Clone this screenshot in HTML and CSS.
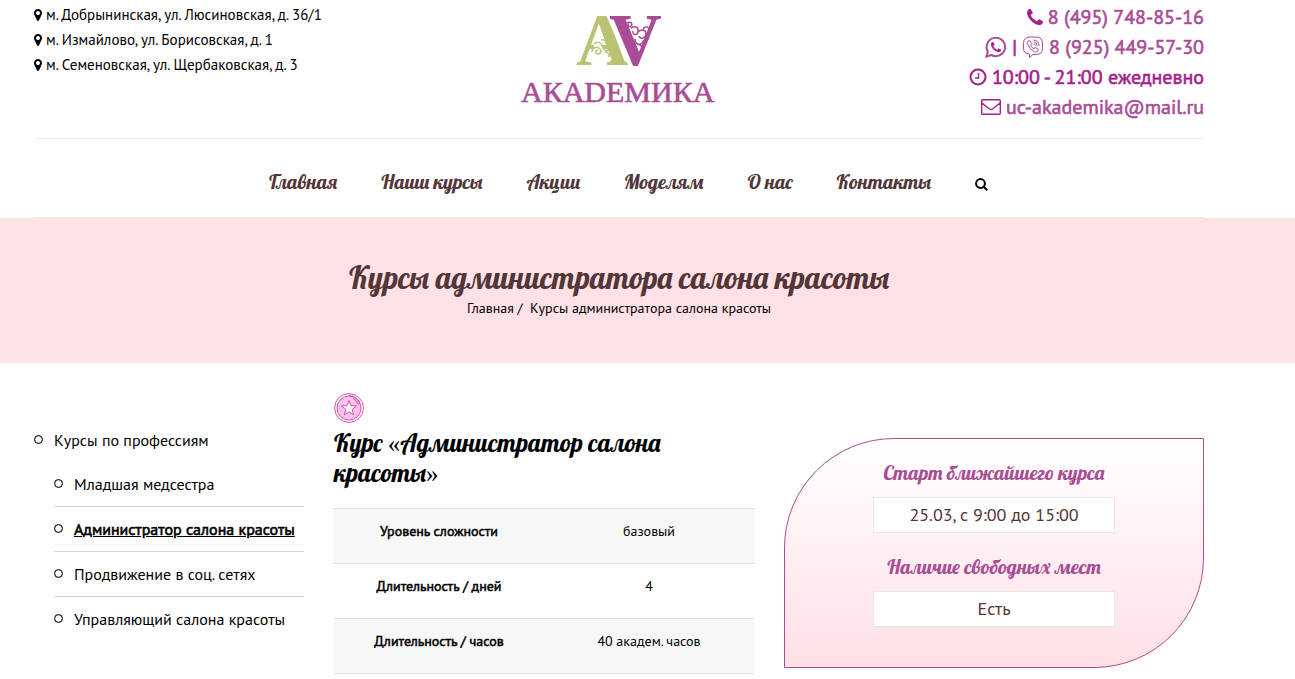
FILE: index.html
```html
<!DOCTYPE html>
<html lang="ru">
<head>
<meta charset="utf-8">
<title>Курсы администратора салона красоты</title>
<link rel="stylesheet" href="styles.css">
</head>
<body>
<svg class="sprite" aria-hidden="true">
  <symbol id="pin" viewBox="0 128 1024 1536"><path d="M768 640q0-106-75-181t-181-75-181 75-75 181 75 181 181 75 181-75 75-181zm256 0q0 109-33 179l-364 774q-16 33-47.500 52t-67.500 19-67.500-19-46.500-52l-365-774q-33-70-33-179 0-212 150-362t362-150 362 150 150 362z"/></symbol>
  <symbol id="phone" viewBox="0 128 1408 1408"><path d="M1408 1240q0 27-10 70.500t-21 68.500q-21 50-122 106-94 51-186 51-27 0-53-3.500t-57.500-12.500-47-14.500-55.500-20.500-49-18q-98-35-175-83-127-79-264-216t-216-264q-48-77-83-175-3-9-18-49t-20.500-55.500-14.500-47-12.500-57.500-3.500-53q0-92 51-186 56-101 106-122 25-11 68.500-21t70.500-10q14 0 21 3 18 6 53 76 11 19 30 54t35 63.500 31 53.500q3 4 17.500 25t21.500 35.500 7 28.500q0 20-28.500 50t-62 55-62 53-28.500 46q0 9 5 22.500t8.500 20.500 14 24 11.500 19q76 137 174 235t235 174q2 1 19 11.500t24 14 20.500 8.500 22.500 5q18 0 46-28.500t53-62 55-62 50-28.500q14 0 28.500 7t35.500 21.500 25 17.500q25 15 53.500 31t63.500 35 54 30q70 35 76 53 3 7 3 21z"/></symbol>
</svg>

<header class="shell">
  <div class="top">
    <address class="places">
      <span class="place"><svg class="pin"><use href="#pin"/></svg>м. Добрынинская, ул. Люсиновская, д. 36/1</span>
      <span class="place"><svg class="pin"><use href="#pin"/></svg>м. Измайлово, ул. Борисовская, д. 1</span>
      <span class="place"><svg class="pin"><use href="#pin"/></svg>м. Семеновская, ул. Щербаковская, д. 3</span>
    </address>
    <a class="logo" href="#">
      <svg width="196" height="92" viewBox="0 0 196 92" role="img" aria-label="Академика">
        <defs>
          <clipPath id="left-half"><path d="M40 0h45l23 52H40z"/></clipPath>
          <clipPath id="right-half"><path d="M87 0h60v52h-36z"/></clipPath>
        </defs>
        <g clip-path="url(#left-half)"><text class="mono mono-a" x="55" y="50">A</text></g>
        <g clip-path="url(#right-half)"><text class="mono mono-v" x="88" y="50">V</text></g>
        <path fill="#fff" d="M73.500 29h7l3 7h-12z"/>
        <path class="curl curl-a" d="M71 37c0-4 4-6 7-4s2 6-1 6-3-4 0-4M73 29c3-3 7-2 8 2s5 6 8 3M80 25c3-1 5 1 5 4M84 37c3 0 5 2 4 5M87 41c5-2 7 1 7 4s-4 3-4 0"/>
        <path class="curl curl-v" d="M106 8c4-2 6 1 4 3s-4-1-2-2M110 13c5-3 8 0 7 4s-6 3-5-1M116 18c4-5 9-3 9 1s-6 6-7 2M114 24c0 5 4 7 7 4s3-6 7-4M118 29c3 4 6 2 7 0M122 15c1-4 5-4 6-1"/>
        <text class="wordmark" x="0" y="87">АКАDЕМИКА</text>
      </svg>
    </a>
    <div class="contacts">
      <a class="contact" href="tel:+74957488516"><svg class="i-phone"><use href="#phone"/></svg>8 (495) 748-85-16</a>
      <a class="contact" href="tel:+79254495730">
        <svg class="i-chat" viewBox="0 0 22 22"><path class="heavy" d="M1.500 20.500l1.400-5A9.200 9.200 0 1 1 6.500 19z"/><svg x="6" y="6" width="10" height="10"><use href="#phone"/></svg></svg>
        <span class="bar">|</span>
        <svg class="i-chat" viewBox="0 0 22 22"><path class="fine" d="M8 1h6q6.500 0 6.500 6.500v5q0 6-6.500 6h-3L7.500 21.500v-3.300Q1.500 17.500 1.500 12.500v-5Q1.500 1 8 1zM6 5.200l1.500-.7 2.300 3-1.200 1.700q1 2.600 3.300 3.500l1.500-1.300 3 2.200-.6 1.600q-1.300 1.600-3.300.6-5.500-2.800-7.300-8.300-.3-1.300.8-2.300zM11.500 4q5.500.5 5.500 6M11.800 6q3.200.3 3.300 3.700M12 8q1.300.2 1.300 1.500"/></svg>
        8 (925) 449-57-30</a>
      <span class="contact hours"><svg class="i-clock" viewBox="0 0 18 18"><circle class="heavy" cx="9" cy="9" r="7.500"/><path class="mid" d="M9.500 5v5H6"/></svg>10:00 - 21:00 ежедневно</span>
      <a class="contact" href="mailto:uc-akademika@mail.ru"><svg class="i-mail" viewBox="0 0 20 16"><path class="mid" d="M1.700.7h16.600q1 0 1 1v12.600q0 1-1 1H1.700q-1 0-1-1V1.700q0-1 1-1zM1 4l7.500 6q1.500 1 3 0L19 4"/></svg>uc-akademika@mail.ru</a>
    </div>
  </div>
  <nav class="nav">
    <a href="#">Главная</a>
    <a href="#">Наши курсы</a>
    <a href="#">Акции</a>
    <a href="#">Моделям</a>
    <a href="#">О нас</a>
    <a href="#">Контакты</a>
    <button class="search" type="button" aria-label="Поиск"><svg viewBox="0 0 13 13"><circle cx="5.500" cy="5.500" r="4.400"/><path d="M8.700 8.700l3.500 3.500"/></svg></button>
  </nav>
</header>

<section class="banner">
  <div class="shell">
    <h1>Курсы администратора салона красоты</h1>
    <p class="crumbs"><a href="#">Главная</a> /&nbsp; Курсы администратора салона красоты</p>
  </div>
</section>

<main class="shell content">
  <aside class="side">
    <a class="item root" href="#">Курсы по профессиям</a>
    <ul class="sub">
      <li><a class="item" href="#">Младшая медсестра</a></li>
      <li><a class="item current" href="#">Администратор салона красоты</a></li>
      <li><a class="item" href="#">Продвижение в соц. сетях</a></li>
      <li><a class="item" href="#">Управляющий салона красоты</a></li>
    </ul>
  </aside>

  <article class="course">
    <svg class="medal" viewBox="0 0 30 30"><circle cx="15" cy="15" r="14.400" fill="#fff"/><circle cx="15" cy="15" r="12" fill="#ffc4ea"/><path d="M15 2.500a12.500 12.500 0 0 1 11 8.500M19 5.500q4 2 5.500 6"/><path fill="#fff" d="M15 7.500l2 5.200 5.600.2-4.400 3.500 1.500 5.400-4.700-3-4.700 3 1.500-5.400-4.400-3.500 5.600-.2z"/></svg>
    <h2>Курс <span class="quote">«</span>Администратор салона красоты<span class="quote">»</span></h2>
    <table class="facts">
      <tbody>
        <tr><th scope="row">Уровень сложности</th><td>базовый</td></tr>
        <tr><th scope="row">Длительность / дней</th><td>4</td></tr>
        <tr><th scope="row">Длительность / часов</th><td>40 академ. часов</td></tr>
      </tbody>
    </table>
  </article>

  <section class="start">
    <h3>Старт ближайшего курса</h3>
    <p>25.03, с 9:00 до 15:00</p>
    <h3>Наличие свободных мест</h3>
    <p>Есть</p>
  </section>
</main>
</body>
</html>
```
FILE: styles.css
```css
:root {
  --body: "PT Sans", "Noto Sans", sans-serif;
  --script: "Lobster", "Liberation Serif", serif;
  --plum: #a94c96;
  --plum-deep: #a31f8b;
  --brown: #533638;
  --pink: #ffe1e6;
}
*, *::before { box-sizing: border-box; }
body { margin: 0; background: #fff; color: #000; font: 14px/25px var(--body); }
a { color: inherit; text-decoration: none; }
h1, h2, h3, p, ul { margin: 0; padding: 0; font-weight: inherit; }
.sprite { position: absolute; width: 0; height: 0; }
.shell { padding: 0 91px 0 34px; }

.top { display: grid; grid-template-columns: 1fr auto 1fr; height: 139px; border-bottom: 1px solid #ebebeb; }
.places { display: flex; flex-direction: column; padding-top: 2px; font-style: normal; font-size: 15px; white-space: nowrap; }
.place { display: flex; align-items: center; gap: 4px; height: 25px; }
.pin { width: 8px; height: 12px; }
.logo { padding-top: 15px; }
.mono { font: bold 73px "Liberation Serif", serif; }
.mono-a { fill: #bac374; }
.mono-v { fill: var(--plum); }
.curl { fill: none; stroke-width: 1.5px; }
.curl-a { stroke: #bac374; }
.curl-v { stroke: var(--plum); }
.wordmark { font: 30px "Liberation Serif", serif; fill: var(--plum); stroke: var(--plum); stroke-width: 0.6px; }

.contacts { display: flex; flex-direction: column; align-items: flex-end; padding-top: 2px; color: var(--plum); font-size: 20px; -webkit-text-stroke: 0.6px currentColor; }
.contact { display: flex; align-items: center; gap: 5px; height: 30px; white-space: nowrap; }
.contact svg { fill: var(--plum-deep); }
.hours, .bar { color: var(--plum-deep); }
.i-phone { width: 16px; height: 16px; }
.i-chat { width: 22px; height: 22px; }
.i-clock { width: 18px; height: 18px; }
.i-mail { width: 20px; height: 16px; }
.contact .heavy, .contact .mid, .contact .fine { fill: none; stroke: var(--plum-deep); }
.contact .heavy { stroke: var(--plum); stroke-width: 2px; }
.contact.hours .heavy { stroke: var(--plum-deep); }
.contact .mid { stroke-width: 1.4px; }
.contact .fine { stroke: var(--plum); stroke-width: 1px; }

.nav { display: flex; justify-content: center; align-items: center; gap: 44px; height: 79px; padding: 8px 0 0 19px; border-bottom: 1px solid #ebebeb; color: var(--brown); font: 20px/30px var(--script); white-space: nowrap; }
.search { display: flex; padding: 4px 0 0; border: 0; background: none; }
.search svg { width: 13px; height: 13px; fill: none; stroke: #000; stroke-width: 2px; }

.banner { height: 145px; padding-top: 42px; background: var(--pink); text-align: center; }
.banner h1 { color: var(--brown); font: 31px/36px var(--script); }
.crumbs { line-height: 24px; font-size: 14px; }

.content { display: grid; grid-template-columns: 27fr 42fr 42fr; gap: 30px; align-items: start; }
.side { padding-top: 55px; }
.item { display: flex; align-items: center; gap: 11px; height: 44px; font-size: 16px; white-space: nowrap; }
.item::before { content: ""; flex: none; width: 9px; height: 9px; margin-bottom: 2px; border: 1px solid #000; border-radius: 50%; box-shadow: inset 0 0 1px #000; }
.sub { padding-left: 20px; list-style: none; }
.sub li + li { border-top: 1px solid #d5d5d5; }
.current { -webkit-text-stroke: 0.6px currentColor; text-decoration: underline; }

.course { padding-top: 30px; }
.medal { display: block; width: 30px; height: 30px; fill: none; stroke: #db4ca9; }
.course h2 { padding: 5px 0 20px; font: 25px/30px var(--script); }
.quote { font-family: "Liberation Serif", serif; line-height: 1; }
.facts { width: 100%; border-collapse: collapse; table-layout: fixed; font-size: 14px; text-align: center; }
.facts tr { height: 55px; border-top: 1px solid #dfdfdf; border-bottom: 1px solid #dfdfdf; }
.facts tr:nth-child(odd) { background: #f7f7f7; }
.facts th, .facts td { padding: 9px 0 19px; font-weight: 400; }
.facts th { -webkit-text-stroke: 0.5px currentColor; }

.start { display: flex; flex-direction: column; align-items: center; height: 230px; margin-top: 75px; padding-top: 19px; border: 1px solid var(--plum); border-radius: 110px 0; background: linear-gradient(#fff, #ffdfe5); }
.start h3 { height: 39px; color: var(--plum); font: 20px/30px var(--script); white-space: nowrap; }
.start p { width: 58%; height: 36px; margin-bottom: 19px; border: 1px solid #e8e8e8; background: #fff; color: var(--brown); font-size: 18px; line-height: 34px; text-align: center; }
```
